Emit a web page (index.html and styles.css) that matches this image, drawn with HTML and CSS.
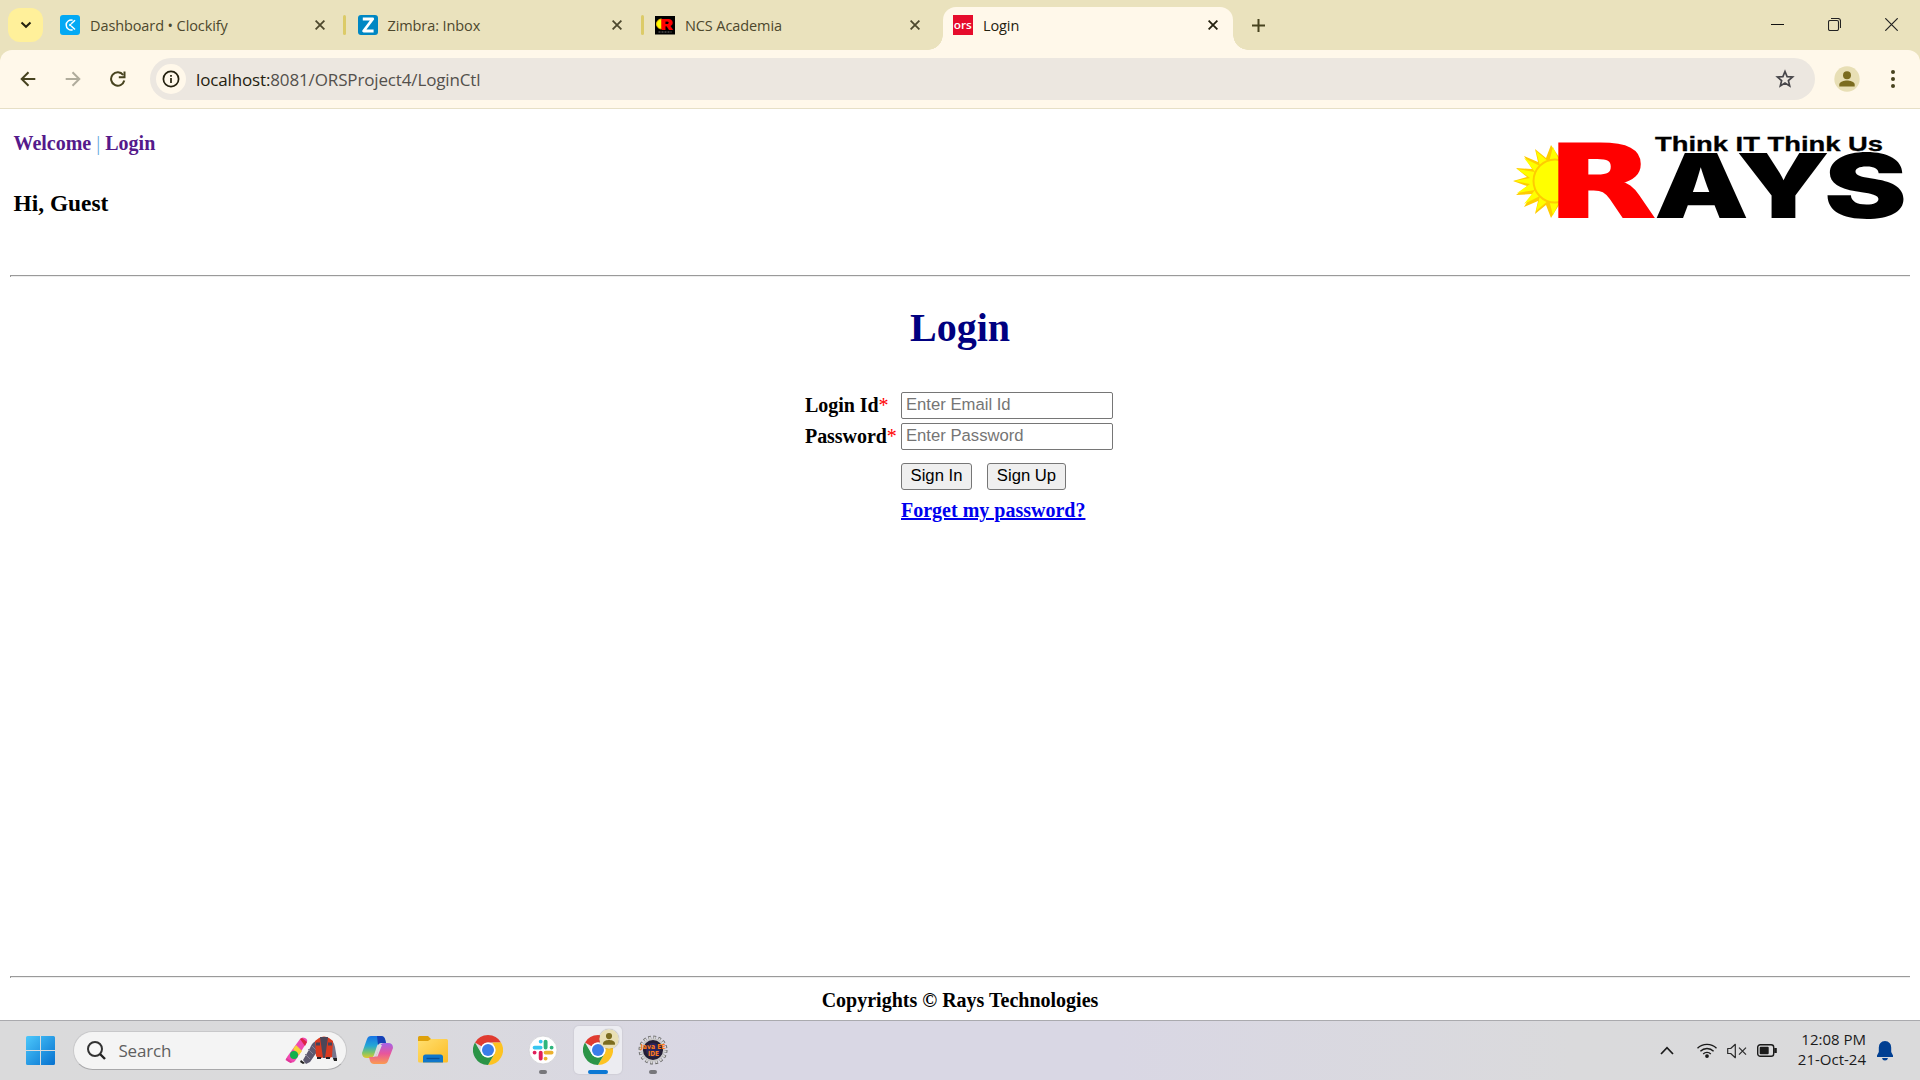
FILE: index.html
```html
<!DOCTYPE html>
<html lang="en">
<head>
<meta charset="utf-8">
<title>Login</title>
<link rel="stylesheet" href="styles.css">
</head>
<body>
<svg width="0" height="0" class="defs">
  <defs>
    <symbol id="close" viewBox="0 0 10 10"><path d="M.6.6l8.8 8.8M9.4.6L.6 9.4" fill="none" stroke="currentColor" stroke-width="1.8"/></symbol>
    <symbol id="chrome" viewBox="0 0 48 48">
      <path d="M24 0A24 24 0 0 1 44.8 12H24A12 12 0 0 0 13.6 18L3.2 12A24 24 0 0 1 24 0z" fill="#e03b30"/>
      <path d="M44.8 12A24 24 0 0 1 24 48L34.4 30A12 12 0 0 0 34.4 18L31 12z" fill="#fdc322"/>
      <path d="M3.2 12A24 24 0 0 0 24 48L34.4 30A12 12 0 0 1 13.6 30z" fill="#2b9447"/>
      <circle cx="24" cy="24" r="12" fill="#fff"/><circle cx="24" cy="24" r="9.6" fill="#3b7de9"/>
    </symbol>
    <symbol id="person" viewBox="0 0 26 26"><circle cx="13" cy="13" r="12.7" fill="#e8dfb5"/><circle cx="13" cy="9.2" r="4" fill="#7b6c1f"/><path d="M5.3 20.6v-2c0-3.200 5-4.200 7.700-4.200s7.700 1 7.700 4.200v2z" fill="#7b6c1f"/></symbol>
    <linearGradient id="win" x1="0" y1="0" x2="1" y2="1"><stop offset="0" stop-color="#4cc8fb"/><stop offset="1" stop-color="#0671cf"/></linearGradient>
    <linearGradient id="folder" x1="0" y1="0" x2="1" y2="1"><stop offset="0" stop-color="#ffdf70"/><stop offset="1" stop-color="#fcbc24"/></linearGradient>
    <linearGradient id="copA" x1="0" y1="0" x2="0" y2="1"><stop offset="0" stop-color="#1673e6"/><stop offset=".45" stop-color="#24a7d4"/><stop offset=".75" stop-color="#7cc46b"/><stop offset="1" stop-color="#e5c72a"/></linearGradient>
    <linearGradient id="copB" x1="0" y1="0" x2="0" y2="1"><stop offset="0" stop-color="#a463e8"/><stop offset=".5" stop-color="#e8569c"/><stop offset="1" stop-color="#fb9b50"/></linearGradient>
  </defs>
</svg>

<header class="tabstrip">
  <button class="tab-search"><svg width="12" height="8" viewBox="0 0 12 8"><path d="M1.500 1.500L6 5.800l4.500-4.300" fill="none" stroke="#24210f" stroke-width="2"/></svg></button>
  <div class="tab first">
    <svg class="fav" viewBox="0 0 20 20"><rect width="20" height="20" rx="3" fill="#03a9f4"/><path d="M12.600 5.200A5 5 0 1 0 12.600 14.800" fill="none" stroke="#fff" stroke-width="1.500"/><path d="M15 5.300l-3.800 3.500M15 14.500l-3.800-3.500" stroke="#fff" stroke-width="1.500"/><circle cx="10.300" cy="10" r="1.200" fill="#fff"/></svg>
    <span class="title">Dashboard • Clockify</span><svg class="x"><use href="#close"/></svg>
  </div>
  <div class="tab">
    <svg class="fav" viewBox="0 0 20 20"><rect width="20" height="20" rx="3" fill="#0087c3"/><path d="M4.800 4h9.900L5.600 16h10" fill="none" stroke="#fff" stroke-width="2.800" stroke-linejoin="round"/></svg>
    <span class="title">Zimbra: Inbox</span><svg class="x"><use href="#close"/></svg>
  </div>
  <div class="tab third">
    <svg class="fav" viewBox="0 0 20 20"><rect y="1" width="20" height="18.500" /><path d="M6.500 4a5 5 0 0 0 0 10z" fill="#ff0" stroke="#f5b800"/><text x="5.500" y="14.500" class="fav-r" textLength="12.500" lengthAdjust="spacingAndGlyphs">R</text><path d="M3.500 17h13" stroke="#777" stroke-dasharray="2 1"/></svg>
    <span class="title">NCS Academia</span><svg class="x"><use href="#close"/></svg>
  </div>
  <div class="tab active">
    <svg class="fav" viewBox="0 0 20 20"><rect width="20" height="20" fill="#e60c2c"/><text x=".8" y="14" class="fav-ors" textLength="18" lengthAdjust="spacingAndGlyphs">ors</text></svg>
    <span class="title">Login</span><svg class="x"><use href="#close"/></svg>
  </div>
  <svg class="plus" viewBox="0 0 13 13"><path d="M6.500 0v13M0 6.500h13" stroke="#47431f" stroke-width="2"/></svg>
  <div class="win-buttons">
    <svg width="13" height="13"><path d="M0 6.500h13" stroke="#111" stroke-width="1"/></svg>
    <svg width="13" height="13" fill="none" stroke="#222" stroke-width="1.100"><rect x=".5" y="2.500" width="10" height="10" rx="1.500"/><path d="M3 .5h7a2.500 2.500 0 0 1 2.500 2.500v7"/></svg>
    <svg width="13" height="13"><path d="M.3.300l12.400 12.400M12.700.300L.3 12.700" stroke="#222" stroke-width="1.200"/></svg>
  </div>
</header>

<nav class="toolbar">
  <div class="toolbar-inner">
    <svg class="back" viewBox="0 0 16 16"><path d="M15.300 8H2M8.500 1.200L1.700 8l6.800 6.800" fill="none" stroke="#47431f" stroke-width="2"/></svg>
    <svg class="forward" viewBox="0 0 16 16"><path d="M.7 8H14M7.500 1.200L14.300 8l-6.800 6.800" fill="none" stroke="#b0ac9c" stroke-width="2"/></svg>
    <svg class="reload" viewBox="0 0 16 16"><path d="M14.300 9.600A6.700 6.700 0 1 1 13.200 4" fill="none" stroke="#47431f" stroke-width="2"/><path d="M14.500.5V6.300H8.800" fill="none" stroke="#47431f" stroke-width="2"/></svg>
    <div class="omnibox">
      <span class="info"><svg width="18" height="18" viewBox="0 0 18 18"><circle cx="9" cy="9" r="7.600" fill="none" stroke="#24210f" stroke-width="1.700"/><path d="M9 8v5M9 4.900v1.800" stroke="#24210f" stroke-width="1.700"/></svg></span>
      <span class="url"><b>localhost:</b>8081/ORSProject4/LoginCtl</span>
      <svg class="star" viewBox="0 0 20 20"><path d="M10 2.500l2.100 5.100 5.500.4-4.200 3.600 1.300 5.400-4.700-2.900-4.700 2.900 1.300-5.400-4.200-3.600 5.500-.4z" fill="none" stroke="#47464a" stroke-width="1.700"/></svg>
    </div>
    <svg class="profile"><use href="#person"/></svg>
    <svg class="menu" viewBox="0 0 4 18"><g fill="#47431f"><circle cx="2" cy="2" r="2"/><circle cx="2" cy="9" r="2"/><circle cx="2" cy="16" r="2"/></g></svg>
  </div>
</nav>

<main class="page">
  <div class="page-head">
    <div>
      <p class="links"><a>Welcome</a> <i>|</i> <a>Login</a></p>
      <h3>Hi, Guest</h3>
    </div>
    <svg class="logo" width="400" height="95" viewBox="1510 130 400 95">
      <path fill="#fc0" d="M1513 181l14-4-11-9 16 1-8-13 14 6-3-13 11 9 5-13 8 12v48l-8 13-5-13-11 9 3-13-14 6 8-13-16 1 11-9z"/>
      <path fill="#ff0" d="M1514 181l16-3-13-9 18 3-11-14 16 8-4-15 13 11 4-15 6 13v42l-6 13-4-15-13 11 4-15-16 8 11-14-18 3 13-9z"/>
      <circle cx="1555" cy="181" r="21.500" fill="#ff0" stroke="#fc0" stroke-width="2"/>
      <text class="rays-r" x="1547.500" y="216.900" font-size="100" textLength="107" lengthAdjust="spacingAndGlyphs">R</text>
      <text class="rays" x="1654" y="217.700" font-size="89" textLength="95" lengthAdjust="spacingAndGlyphs">A</text>
      <text class="rays" x="1736" y="217.700" font-size="89" textLength="94" lengthAdjust="spacingAndGlyphs">Y</text>
      <text class="rays" x="1824" y="217.700" font-size="89" textLength="83" lengthAdjust="spacingAndGlyphs">S</text>
      <text class="motto" x="1655" y="151" textLength="228" lengthAdjust="spacingAndGlyphs">Think IT Think Us</text>
    </svg>
  </div>
  <hr>
  <h1>Login</h1>
  <form class="login">
    <label>Login Id<em>*</em></label><input type="text" placeholder="Enter Email Id">
    <label>Password<em>*</em></label><input type="text" placeholder="Enter Password">
    <div class="actions"><button type="button" class="in">Sign In</button><button type="button" class="up">Sign Up</button></div>
    <a class="forget">Forget my password?</a>
  </form>
  <footer><hr><p>Copyrights © Rays Technologies</p></footer>
</main>

<div class="taskbar">
  <svg class="start" viewBox="0 0 29 29"><path fill="url(#win)" d="M1.500 0H14v14H0V1.500A1.500 1.500 0 0 1 1.500 0zM15 0h12.500A1.500 1.500 0 0 1 29 1.500V14H15zM0 15h14v14H1.500A1.500 1.500 0 0 1 0 27.500zM15 15h14v12.500a1.500 1.500 0 0 1-1.500 1.500H15z"/></svg>
  <div class="search">
    <svg width="19" height="19" viewBox="0 0 19 19"><circle cx="8" cy="8" r="7" fill="#f8f8f8" stroke="#333" stroke-width="2"/><path d="M13 13l5 5" stroke="#222" stroke-width="2.400"/></svg>
    <span>Search</span>
    <svg class="promo" width="53" height="28" viewBox="0 0 53 28">
      <path d="M2 21L15 3q2-2.500 5-1 3 1.500 2 4L10 25q-2 2.500-6 1-4-2-2-5z" fill="#ee4bb0"/><path d="M15 3l5 7 2-4-5-4z" fill="#dc2345"/><path d="M8 13l3-4 6 6-3 4z" fill="#f6d338"/><circle cx="9" cy="19" r="4" fill="#12b14b"/><path d="M1.500 22l6 4-2 1-5-3z" fill="#e23699"/>
      <path d="M33 4q-6 2-8 8l-7 12 3 4 4-2 9-13z" fill="#5d5970"/><path d="M26 9l5 5M23 13l5 5M20 18l5 5" stroke="#858198"/><path d="M16 24l4 3-2 1-3-2z" fill="#222"/>
      <path d="M44 3q5 2 6 8l2 12-3 1-7-12z" fill="#77758c"/><path d="M48 22h4v3h-3z" fill="#222"/>
      <path d="M34 2q5-3 10 0l4 3-1 16-5 2-3-2-5 2-3-3-1-15z" fill="#d93a20"/><path d="M35 1h8l-3 21h-2z" fill="#4c4658"/><path d="M31 8h4M43 8h4" stroke="#45445b" stroke-width="3"/><path d="M32 22h4M41 22h4" stroke="#26212a" stroke-width="2"/>
    </svg>
  </div>
  <div class="app"><svg width="31" height="28" viewBox="0 0 31 28">
    <path d="M9 0h10q3 0 4 3l1 4h-5q-3 0-4 3l-3 9q-1 3-4 3H5q-5 0-5-5L5 3q1-3 4-3z" fill="url(#copA)"/><path d="M15 0h4q3 0 4 3l1 4h-5q-2 0-3 2z" fill="#173fb5"/>
    <path d="M22 28H12q-3 0-4-3l-1-4h4q3 0 4-3l3-8q1-3 4-3h4q5 0 5 5l-5 13q-1 3-4 3z" fill="url(#copB)"/><path d="M17.500 9h2.500l-4.500 11.500H13q1.500-1 2-2.500z" fill="#dcdbe1"/>
  </svg></div>
  <div class="app"><svg width="30" height="27" viewBox="0 0 30 27"><path d="M0 1.500Q0 0 1.500 0H10l3 3h15v12H0z" fill="#dea10c"/><path d="M0 5h10l3-2h15.500Q30 3 30 4.500V25q0 1.500-1.500 1.500h-27Q0 26.500 0 25z" fill="url(#folder)"/><path d="M5 26.500V21q0-2.500 2.500-2.500h15Q25 18.500 25 21v5.500z" fill="#1077ca"/><path d="M8.500 22.500h13" stroke="#0a4f95" stroke-width="1.400"/></svg></div>
  <div class="app"><svg width="30" height="30"><use href="#chrome"/></svg></div>
  <div class="app running"><svg width="30" height="30" viewBox="0 0 30 30"><circle cx="15" cy="15" r="14" fill="#fff" stroke="#cfcfd4" stroke-width=".8"/><g stroke-width="3.900" stroke-linecap="round"><path d="M12.700 6.600v0M6.600 12.600h6" stroke="#36c5f0"/><path d="M17.600 6.600v6M23.600 12.600v0" stroke="#2eb67d"/><path d="M17.600 17.600h6M17.600 23.600v0" stroke="#ecb22e"/><path d="M12.700 17.600v6M6.600 17.600v0" stroke="#e01e5a"/></g></svg></div>
  <div class="app current"><svg width="30" height="30"><use href="#chrome"/></svg><svg class="badge"><use href="#person"/></svg></div>
  <div class="app running"><svg width="30" height="30" viewBox="0 0 30 30"><circle cx="15" cy="15" r="12.700" fill="none" stroke="#686868" stroke-width="3.600" stroke-dasharray="2.700 2.284"/><circle cx="15" cy="15" r="12.300" fill="none" stroke="#d8d8d8" stroke-width="2.600" stroke-dasharray="1.900 2.930" stroke-dashoffset="-.4"/><circle cx="15" cy="15" r="10.800" fill="#231e35" stroke="#c8c8c8" stroke-width="1.500"/><circle cx="15" cy="15" r="7" fill="#2b245c"/><text class="ee" x="2.500" y="14.200" textLength="25" lengthAdjust="spacingAndGlyphs">Java EE</text><text class="ee" x="10" y="20.800" textLength="11" lengthAdjust="spacingAndGlyphs">IDE</text></svg></div>
  <div class="tray">
    <svg class="chev" width="14" height="9"><path d="M1 8l6-6.300L13 8" fill="none" stroke="#1b1b1b" stroke-width="1.700"/></svg>
    <svg class="wifi" width="20" height="15" viewBox="0 0 20 15" fill="none" stroke="#1b1b1b" stroke-width="1.350"><path d="M.5 5.300a13.400 13.400 0 0 1 19 0M3.400 8.200a9.300 9.300 0 0 1 13.200 0M6.200 11a5.400 5.400 0 0 1 7.600 0"/><circle cx="10" cy="13" r="1.200" fill="#1b1b1b"/></svg>
    <svg class="vol" width="20" height="16" viewBox="0 0 20 16" fill="none" stroke="#2b2b2b" stroke-width="1.200"><path d="M.7 5.500h3L8.300 1.300v13.400L3.700 10.500h-3z" stroke-linejoin="round"/><path d="M12 4.700l7 7M19 4.700l-7 7"/></svg>
    <svg class="bat" width="20" height="13" viewBox="0 0 20 13"><rect x=".7" y=".7" width="16" height="11.600" rx="2.600" fill="none" stroke="#1b1b1b" stroke-width="1.400"/><rect x="2.700" y="2.700" width="9" height="7.600" rx="1" fill="#1b1b1b"/><path d="M18.500 4v5" stroke="#1b1b1b" stroke-width="2.600"/></svg>
    <div class="clock"><span>12:08 PM</span><span>21-Oct-24</span></div>
    <svg class="bell" width="16" height="20" viewBox="0 0 16 20"><path d="M8 0q6 .5 6.200 6.500V11L16 14.500V16H0v-1.500L1.800 11V6.500Q2 .5 8 0zM5 17h6q-.5 2.500-3 2.500T5 17z" fill="#003f92"/></svg>
  </div>
</div>
</body>
</html>
```
FILE: styles.css
```css
* { box-sizing: border-box; }
body { margin: 0; width: 1920px; height: 1080px; overflow: hidden; display: flex; flex-direction: column; background: #fff; font-family: "Liberation Serif", serif; }
svg { display: block; flex: none; }
.defs { position: absolute; }
button { font-family: inherit; }

.tabstrip { height: 50px; background: #eae2bd; display: flex; align-items: flex-start; padding: 0 31px 0 8px; font-family: "Open Sans", sans-serif; }
.tab-search { width: 35px; height: 34px; margin-top: 8px; border: 0; border-radius: 12px; background: #fff09a; display: grid; place-items: center; padding: 0; }
.tab { height: 50px; width: 297.5px; display: flex; align-items: center; padding: 0 21px 0 12.5px; color: #4d482d; position: relative; }
.tab.first { width: 302px; padding: 0 20px 0 17px; }
.tab:not(.active)::after { content: ""; width: 3px; height: 20px; border-radius: 2px; background: #dccb68; position: absolute; right: -1px; top: 15px; }
.tab.third::after { display: none; }
.tab.third { width: 300.5px; padding-right: 23.5px; }
.fav { width: 20px; height: 20px; margin-right: 10px; }
.title { font-size: 14.5px; line-height: 20px; margin-top: 1px; letter-spacing: -.1px; flex: 1; white-space: nowrap; }
.x { width: 10px; height: 10px; }
.tab.active { width: 290px; height: 43px; margin-top: 7px; padding: 0 15.5px 7px 10px; border-radius: 13px 13px 0 0; background: #fff8ea; color: #24210f; }
.tab.active::before, .tab.active::after { content: ""; position: absolute; width: 15px; height: 15px; top: auto; bottom: 0; border-radius: 0; }
.tab.active::before { left: -15px; background: radial-gradient(circle at 0 0, #eae2bd 14.5px, #fff8ea 15px); }
.tab.active::after { right: -15px; background: radial-gradient(circle at 100% 0, #eae2bd 14.5px, #fff8ea 15px); }
.plus { width: 13px; height: 13px; margin: 19px 0 0 19px; }
.win-buttons { margin: 18px -9px 0 auto; display: flex; gap: 44px; }
.fav-r { font: 900 15px Inter, sans-serif; fill: red; }
.fav-ors { font: 600 11px "Open Sans", sans-serif; fill: #fff; }

.toolbar { height: 59px; background: #eae2bd; }
.toolbar-inner { height: 59px; background: #fff8ea; border-radius: 12px 12px 0 0; border-bottom: 1px solid #e6dfc6; display: flex; align-items: center; padding: 0 25.5px 0 20px; }
.back, .forward, .reload { width: 16px; height: 16px; }
.forward { margin-left: 29px; }
.reload { margin-left: 29px; }
.omnibox { margin-left: 24px; width: 1665px; height: 42px; border-radius: 21px; background: #ece7e0; display: flex; align-items: center; padding: 0 20px 0 6px; font-family: "Open Sans", sans-serif; }
.info { width: 30px; height: 30px; border-radius: 50%; background: #fff8ea; display: grid; place-items: center; }
.url { margin-left: 10px; font-size: 17px; letter-spacing: -.14px; color: #53504c; flex: 1; white-space: nowrap; }
.url b { font-weight: 400; color: #24210f; }
.star { width: 20px; height: 20px; }
.profile { width: 26px; height: 26px; margin-left: 19px; }
.menu { width: 4px; height: 18px; margin-left: auto; }

.page { height: 911px; padding: 0 10px; display: flex; flex-direction: column; font-weight: bold; }
.page-head { height: 166px; display: flex; justify-content: space-between; padding: 21px 0 0 3.5px; }
.links { margin: 1px 0 0; font-size: 20px; line-height: 24px; color: #551a8b; }
.links i { font-style: normal; font-weight: 400; color: #6aaede; }
h3 { margin: 34px 0 0; font-size: 23.4px; line-height: 28px; }
.logo { overflow: visible; }
.rays { font-family: Inter, sans-serif; font-weight: 900; }
.rays-r { font-family: "DejaVu Sans", sans-serif; font-weight: 700; fill: red; stroke: red; stroke-width: 2.8px; }
.motto { font: bold 20.5px "Liberation Sans", sans-serif; stroke: #000; stroke-width: .3px; }
hr { width: 100%; margin: 0; height: 2px; border: 0; border-top: 1px solid #9a9a9a; border-left: 1px solid #9a9a9a; background: #eee; flex: none; }
h1 { margin: 28px 0 0; font-size: 40px; line-height: 46px; text-align: center; color: #000080; }
.login { width: 310px; margin: 41px 0 0 795px; display: grid; grid-template-columns: 96px 212px; grid-template-rows: 31px 31px; }
label { font-size: 20px; line-height: 27px; white-space: nowrap; letter-spacing: -.05px; }
label em { font-style: normal; font-weight: 400; color: red; }
input { width: 212px; height: 27px; border: 1px solid #767676; border-radius: 2px; padding: 0 4px 2px; font: 16.67px "Liberation Sans", sans-serif; }
input::placeholder { color: #757575; }
.actions { grid-column: 2; display: flex; gap: 15px; margin-top: 9px; }
.actions button { height: 27px; border: 1px solid #767676; border-radius: 3px; background: #efefef; font: 16.67px "Liberation Sans", sans-serif; padding: 0 0 2px; }
.in { width: 71px; }
.up { width: 79px; }
.forget { grid-column: 2; margin: 8px 0 0; font-size: 20px; line-height: 24px; color: #00e; text-decoration: underline; white-space: nowrap; }
footer { margin-top: auto; height: 44px; }
footer p { margin: 10px 0 0; font-size: 20px; line-height: 24px; text-align: center; }

.taskbar { height: 60px; border-top: 1px solid #aaaaae; background: linear-gradient(90deg, #dadadb 0, #dadadc 18%, #d9d7e4 38%, #d9d7e4 58%, #dadadc 82%, #dadadb 100%); display: flex; align-items: center; padding-left: 26px; font-family: "Open Sans", sans-serif; }
.start { width: 29px; height: 29px; }
.search { width: 274px; height: 39px; margin: 0 7px 1px 17.5px; border: 1px solid #c8c8ca; border-bottom-color: #a8a8aa; border-radius: 20px; background: #f4f4f4; display: flex; align-items: center; padding: 0 8px 0 13px; }
.search span { font-size: 17px; color: #5f5f5f; margin-left: 13px; flex: 1; letter-spacing: -.2px; }
.app { width: 48px; height: 48px; margin: 0 7px 2px 0; display: grid; place-items: center; position: relative; border-radius: 5px; }
.current { background: #ececf1; box-shadow: 0 0 1px 1px #d0cfd8; }
.badge { position: absolute; width: 20px; height: 20px; left: 25px; top: 3px; border-radius: 50%; box-shadow: 0 0 1px #777; }
.running::after, .current::after { content: ""; position: absolute; bottom: 0; left: 20px; width: 8px; height: 4px; border-radius: 2px; background: #77777b; }
.current::after { left: 14px; width: 20px; background: #0c78d4; }
.ee { font: bold 7px "DejaVu Sans", sans-serif; fill: #ff7b17; }
.tray { margin-left: auto; padding-right: 27px; display: flex; align-items: center; }
.wifi { margin-left: 23px; }
.vol { margin-left: 10px; }
.bat { margin-left: 10px; }
.clock { width: 89px; margin-bottom: 4px; display: flex; flex-direction: column; align-items: flex-end; font-size: 15px; line-height: 20px; color: #1b1b1b; white-space: nowrap; }
.bell { margin-left: 11px; }
```
